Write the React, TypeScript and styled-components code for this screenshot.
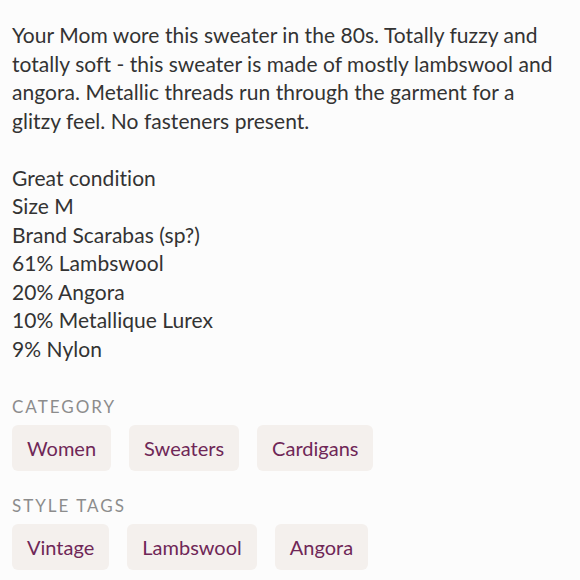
import * as React from 'react';
import styled, { createGlobalStyle } from 'styled-components';

const GlobalStyle = createGlobalStyle`
    html, body {
        margin: 0;
        padding: 0;
        background: #fcfcfc;
    }
    body {
        font-family: Lato, "Open Sans", sans-serif;
    }
`;

const Page = styled.div`
    width: 580px;
    height: 580px;
    overflow: hidden;
    box-sizing: border-box;
    padding: 21px 12px 0 12px;
    color: #333333;
`;
const Description = styled.div`
    font-size: 21px;
    letter-spacing: 0.05px;
    line-height: 28.5px;
    white-space: pre-wrap;
    margin-bottom: 34px;
`;
const SectionLabel = styled.div`
    font-size: 17px;
    letter-spacing: 2px;
    color: #8c8c8c;
    text-transform: uppercase;
    line-height: 20px;
    margin-bottom: 8px;
`;
const ChipRow = styled.div`
    display: flex;
    flex-direction: row;
    gap: 18px;
    margin-bottom: 25px;
`;
const Chip = styled.div`
    height: 46px;
    display: flex;
    align-items: center;
    padding: 0 15px;
    background-color: #f4f0ed;
    border-radius: 6px;
    color: #6f2757;
    font-size: 20px;
`;

const description = `Your Mom wore this sweater in the 80s. Totally fuzzy and totally soft - this sweater is made of mostly lambswool and angora. Metallic threads run through the garment for a glitzy feel. No fasteners present.

Great condition
Size M
Brand Scarabas (sp?)
61% Lambswool
20% Angora
10% Metallique Lurex
9% Nylon`;

const sections = [
    { label: 'Category', items: ['Women', 'Sweaters', 'Cardigans'] },
    { label: 'Style Tags', items: ['Vintage', 'Lambswool', 'Angora'] },
];

const App: React.FC = () => (
    <>
        <GlobalStyle />
        <Page>
            <Description>{description}</Description>
            {sections.map(s => (
                <React.Fragment key={s.label}>
                    <SectionLabel>{s.label}</SectionLabel>
                    <ChipRow>
                        {s.items.map(i => <Chip key={i}>{i}</Chip>)}
                    </ChipRow>
                </React.Fragment>
            ))}
        </Page>
    </>
);

export default App;
